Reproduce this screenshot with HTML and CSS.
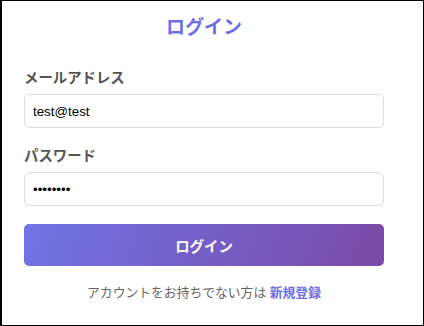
FILE: index.html
```html
<!DOCTYPE html>
<html lang="ja">
<head>
    <meta charset="UTF-8">
    <meta name="viewport" content="width=device-width, initial-scale=1.0">
    <title>ログイン</title>
    <link rel="stylesheet" href="styles.css">
</head>
<body>
    <div class="frame">
        <div class="card">
            <h1 class="title">ログイン</h1>
            <form class="login-form" onsubmit="return false">
                <label class="label" for="email">メールアドレス</label>
                <input class="field" id="email" type="text" value="test@test">
                <label class="label label-second" for="password">パスワード</label>
                <input class="field" id="password" type="password" value="password">
                <button class="login-button" type="submit">ログイン</button>
            </form>
            <p class="signup">アカウントをお持ちでない方は <a href="#" class="signup-link">新規登録</a></p>
        </div>
    </div>
</body>
</html>
```

FILE: styles.css
```css
* {
    box-sizing: border-box;
}
body {
    margin: 0;
    font-family: "Liberation Sans", "Noto Sans CJK JP", sans-serif;
    background-color: #fff;
}
.frame {
    width: 424px;
    height: 326px;
    border: 1px solid #000;
    border-left-width: 2px;
    padding: 15px 0 0 22px;
}
.card {
    width: 360px;
}
.title {
    margin: 0;
    font-size: 19px;
    line-height: 24px;
    font-weight: bold;
    text-align: center;
    color: #6c70e4;
}
.login-form {
    display: flex;
    flex-direction: column;
    margin-top: 28px;
}
.label {
    font-size: 14.4px;
    line-height: 20px;
    font-weight: bold;
    color: #555;
    margin-bottom: 6px;
}
.label-second {
    margin-top: 18px;
}
.field {
    height: 34px;
    padding: 0 8px;
    border: 1px solid #ddd;
    border-radius: 5px;
    font-family: "Liberation Sans", sans-serif;
    font-size: 13.333px;
    color: #000;
    outline: none;
}
.login-button {
    margin-top: 18px;
    height: 42px;
    border: none;
    border-radius: 5px;
    background: linear-gradient(110deg, #7073e6 0%, #7a4aa6 100%);
    color: #fff;
    font-family: "Liberation Sans", "Noto Sans CJK JP", sans-serif;
    font-size: 14.4px;
    font-weight: bold;
    cursor: pointer;
}
.signup {
    margin: 17px 0 0;
    font-size: 12.8px;
    line-height: 20px;
    text-align: center;
    color: #666;
}
.signup-link {
    color: #6c70e4;
    font-weight: bold;
    text-decoration: none;
}
```
